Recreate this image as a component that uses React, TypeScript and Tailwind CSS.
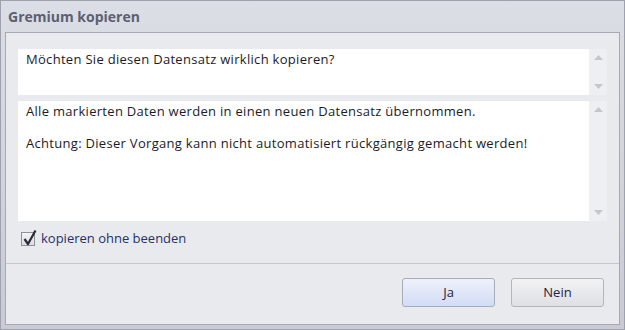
import React from 'react';

const ScrollArrows: React.FC = () => (
  <div className="w-[18px] bg-[#eeeff3] flex flex-col items-center justify-between py-[6px]">
    <svg width="9" height="5" viewBox="0 0 9 5"><path d="M0 5 L4.5 0 L9 5 Z" fill="#c3c6cf" /></svg>
    <svg width="9" height="5" viewBox="0 0 9 5"><path d="M0 0 L4.5 5 L9 0 Z" fill="#c3c6cf" /></svg>
  </div>
);

const App: React.FC = () => {
  return (
    <div className="w-[625px] h-[330px] bg-[#c9cbd3] font-['Open_Sans',sans-serif] text-[13px]">
      <div className="w-full h-full border border-[#9fa2ad] flex flex-col bg-gradient-to-b from-[#dcdee5] to-[#c9cbd4]">
        <div className="h-[31px] flex items-center pl-[7px] shrink-0">
          <span className="font-bold text-[14px] text-[#5b6072]">Gremium kopieren</span>
        </div>
        <div className="flex-1 mx-[4px] mb-[4px] border border-[#a6a9b3] bg-[#e9eaee] flex flex-col">
          <div className="px-[12px] pt-[16px]">
            <div className="h-[46px] flex bg-white">
              <div className="flex-1 px-[8px] pt-[1px] text-[#1b1b2a] tracking-[0.3px]">Möchten Sie diesen Datensatz wirklich kopieren?</div>
              <ScrollArrows />
            </div>
            <div className="h-[120px] mt-[6px] flex bg-white">
              <div className="flex-1 px-[8px] pt-[1px] text-[#1b1b2a] leading-[18px] tracking-[0.3px]">
                <p>Alle markierten Daten werden in einen neuen Datensatz übernommen.</p>
                <p className="mt-[14px]">Achtung: Dieser Vorgang kann nicht automatisiert rückgängig gemacht werden!</p>
              </div>
              <ScrollArrows />
            </div>
            <div className="flex items-center mt-[8px] ml-[3px] h-[20px]">
              <div className="w-[14px] h-[14px] border border-[#8e919c] bg-gradient-to-b from-[#f4f4f6] to-[#dcdde2] relative">
                <svg className="absolute left-[1px] top-[-4px]" width="14" height="17" viewBox="0 0 14 17">
                  <path d="M1.5 10 L5 15 L12.5 1.5" fill="none" stroke="#2a2c35" strokeWidth="2.2" strokeLinejoin="round" />
                </svg>
              </div>
              <span className="ml-[6px] text-[#27306a]">kopieren ohne beenden</span>
            </div>
          </div>
          <div className="mt-[14px] border-t border-[#c4c6cd] flex-1 flex justify-end items-start gap-[16px] pr-[15px] pt-[14px]">
            <button className="w-[93px] h-[29px] rounded-[3px] border border-[#a7acbc] bg-gradient-to-b from-[#eef1fb] to-[#d2dcf5] text-[#1e2442]">Ja</button>
            <button className="w-[93px] h-[29px] rounded-[3px] border border-[#b3b5bd] bg-gradient-to-b from-[#f2f2f4] to-[#dfe0e4] text-[#1e2442]">Nein</button>
          </div>
        </div>
      </div>
    </div>
  );
};

export default App;
